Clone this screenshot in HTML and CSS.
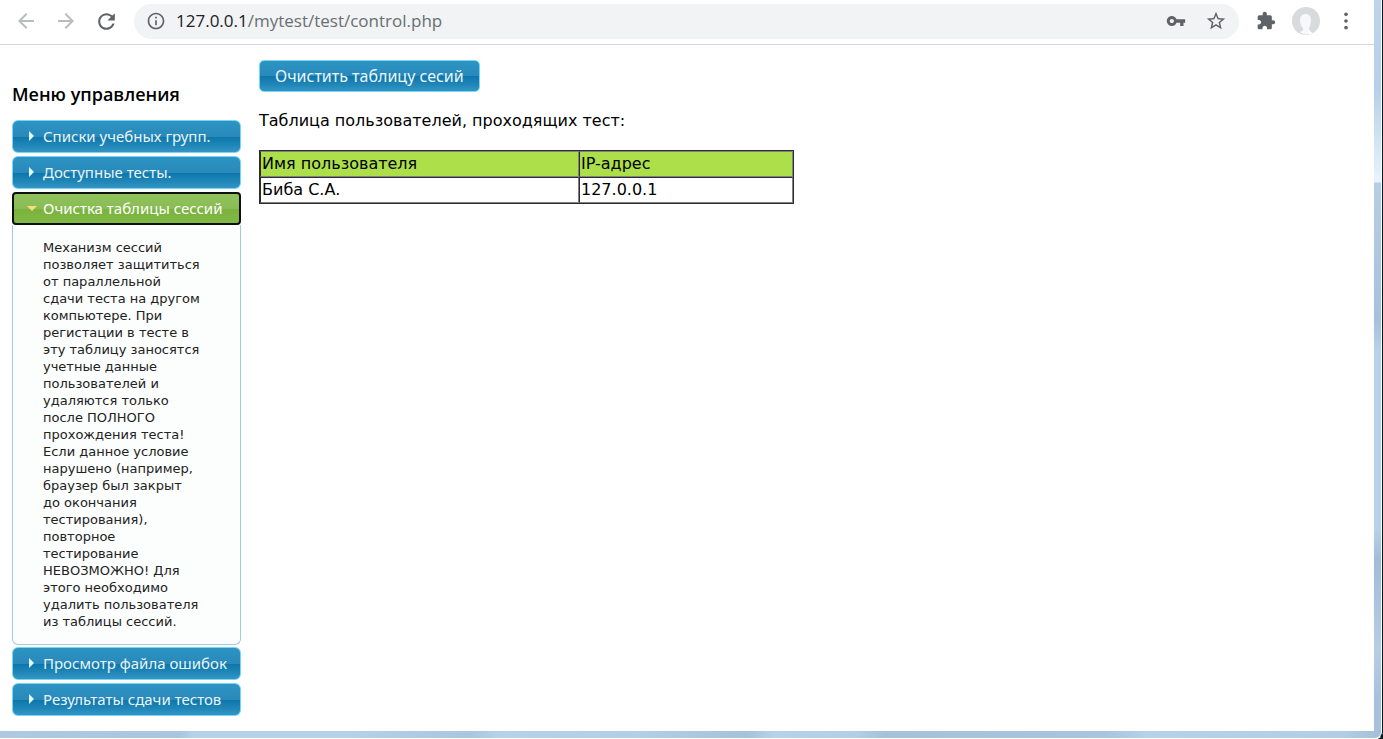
FILE: index.html
```html
<!DOCTYPE html>
<html lang="ru">
<head>
<meta charset="utf-8">
<title>Меню управления</title>
<link rel="stylesheet" href="styles.css">
</head>
<body>
<div class="window">
  <div class="client">
    <header class="toolbar">
      <button class="tool" aria-label="Назад"><svg class="icon faded" viewBox="0 0 24 24"><path d="M20 11H7.830l5.590-5.590L12 4l-8 8 8 8 1.410-1.410L7.830 13H20v-2z"/></svg></button>
      <button class="tool" aria-label="Вперёд"><svg class="icon faded" viewBox="0 0 24 24"><path d="M12 4l-1.410 1.410L16.170 11H4v2h12.170l-5.580 5.590L12 20l8-8z"/></svg></button>
      <button class="tool" aria-label="Обновить"><svg class="icon reload" viewBox="0 0 24 24"><path d="M17.650 6.350C16.200 4.900 14.210 4 12 4c-4.420 0-7.990 3.580-7.990 8s3.570 8 7.990 8c3.730 0 6.840-2.550 7.730-6h-2.080c-.820 2.330-3.040 4-5.650 4-3.310 0-6-2.690-6-6s2.690-6 6-6c1.660 0 3.140.690 4.220 1.780L13 11h7V4l-2.350 2.350z"/></svg></button>
      <div class="address">
        <svg class="icon info" viewBox="0 0 24 24"><path d="M11 17h2v-6h-2v6zm1-15C6.480 2 2 6.480 2 12s4.480 10 10 10 10-4.480 10-10S17.520 2 12 2zm0 18c-4.410 0-8-3.590-8-8s3.590-8 8-8 8 3.590 8 8-3.590 8-8 8zM11 9h2V7h-2v2z"/></svg>
        <a class="url" href="#"><span class="host">127.0.0.1</span>/mytest/test/control.php</a>
        <button class="tool" aria-label="Пароли"><svg class="icon" viewBox="0 0 24 24"><path d="M12.650 10C11.830 7.670 9.610 6 7 6c-3.310 0-6 2.690-6 6s2.690 6 6 6c2.610 0 4.830-1.670 5.650-4H17v4h4v-4h2v-4H12.650zM7 14.500c-1.380 0-2.500-1.120-2.500-2.500s1.120-2.500 2.500-2.500 2.500 1.120 2.500 2.500-1.120 2.500-2.500 2.500z"/></svg></button>
        <button class="tool star" aria-label="Закладка"><svg class="icon" viewBox="0 0 24 24"><path d="M22 9.240l-7.190-.620L12 2 9.190 8.630 2 9.240l5.460 4.730L5.820 21 12 17.270 18.180 21l-1.630-7.030L22 9.240zM12 15.400l-3.760 2.270 1-4.280-3.320-2.880 4.380-.380L12 6.100l1.710 4.040 4.380.380-3.320 2.880 1 4.280L12 15.400z"/></svg></button>
      </div>
      <button class="tool puzzle" aria-label="Расширения"><svg class="icon" viewBox="0 0 24 24"><path d="M20.500 11H19V7c0-1.100-.900-2-2-2h-4V3.500C13 2.120 11.880 1 10.500 1S8 2.120 8 3.500V5H4c-1.100 0-1.990.900-1.990 2v3.800H3.500c1.490 0 2.700 1.210 2.700 2.700s-1.210 2.700-2.700 2.700H2V20c0 1.100.900 2 2 2h3.800v-1.500c0-1.490 1.210-2.700 2.700-2.700 1.490 0 2.700 1.210 2.700 2.700V22H17c1.100 0 2-.900 2-2v-4h1.500c1.380 0 2.500-1.120 2.500-2.500S21.880 11 20.500 11z"/></svg></button>
      <button class="tool" aria-label="Профиль"><svg class="avatar" viewBox="0 0 28 28"><circle cx="14" cy="14" r="14" fill="#d9dadb"/><path d="M8 13C8 5 19 5 19 13c0 5-2 7-2 9 0 2 1 3 0 5-3 1-7 0-9-2 2-1 4-2 3-4-2-2-3-4-3-8z" fill="#f6f9fc"/><path d="M17 22c-1 2-1 4 0 6l4-2c-2-1-4-2-4-4z" fill="#fff"/></svg></button>
      <button class="tool" aria-label="Меню"><svg class="icon" viewBox="0 0 24 24"><circle cx="12" cy="4" r="2.200"/><circle cx="12" cy="12" r="2.200"/><circle cx="12" cy="20" r="2.200"/></svg></button>
    </header>
    <div class="page">
      <nav class="sidebar">
        <h1 class="heading">Меню управления</h1>
        <div class="accordion">
          <button class="tab"><span class="arrow"></span>Списки учебных групп.</button>
          <button class="tab"><span class="arrow"></span>Доступные тесты.</button>
          <div class="section">
            <button class="tab active" aria-expanded="true"><span class="arrow open"></span>Очистка таблицы сессий</button>
            <div class="panel">Механизм сессий<br>позволяет защититься<br>от параллельной<br>сдачи теста на другом<br>компьютере. При<br>регистации в тесте в<br>эту таблицу заносятся<br>учетные данные<br>пользователей и<br>удаляются только<br>после ПОЛНОГО<br>прохождения теста!<br>Если данное условие<br>нарушено (например,<br>браузер был закрыт<br>до окончания<br>тестирования),<br>повторное<br>тестирование<br>НЕВОЗМОЖНО! Для<br>этого необходимо<br>удалить пользователя<br>из таблицы сессий.</div>
          </div>
          <button class="tab"><span class="arrow"></span>Просмотр файла ошибок</button>
          <button class="tab"><span class="arrow"></span>Результаты сдачи тестов</button>
        </div>
      </nav>
      <main class="content">
        <button class="clear">Очистить таблицу сесий</button>
        <p class="caption">Таблица пользователей, проходящих тест:</p>
        <table class="users">
          <thead><tr><th class="name">Имя пользователя</th><th class="ip">IP-адрес</th></tr></thead>
          <tbody><tr><td>Биба С.А.</td><td>127.0.0.1</td></tr></tbody>
        </table>
      </main>
    </div>
  </div>
</div>
</body>
</html>
```
FILE: styles.css
```css
* { box-sizing: border-box; }
html { background: linear-gradient(#0c1a20, #0c1a20) right bottom / 5px 5px no-repeat #fff; }
body { margin: 0; color: #000; font-family: "Open Sans", sans-serif; }
button { font: inherit; margin: 0; border: 0; padding: 0; background: none; cursor: pointer; }
.window {
  min-height: 100vh;
  display: flex;
  padding: 0 7px 7px 0;
  border-right: 1px solid #0c1a20;
  border-bottom: 1px solid #fff;
  box-shadow: inset -1px 0 #fff;
  background:
    linear-gradient(90deg, #afc9e2, #a9c5df 13%, #b6d1ea 14%, #b6d1ea 25%, #a9c5df 34%, #b6d1ea 36%, #b3cee7 46%, #a6c1da 54%, #b6d1ea 56%, #b3cee7 62%, #a6c2db 64%, #a8c4de 80%, #b6d1ea 83%, #b3cde6 97%, #a3bfd8) bottom / 100% 7px no-repeat,
    linear-gradient(#bed4ec, #b5d0ea 90px, #e8f3fc 180px, #e8f3fc 182px, #b5cee6 183px, #a5c1dc 320px, #b6d2ea 350px, #b6d2ea 530px, #a0bcd8 560px, #b5cee6 650px, #a5c1dc 700px);
  border-radius: 0 0 7px 0;
}
.client { flex: 1; min-width: 0; background: #fff; margin-right: 1px; }
.toolbar {
  height: 45px; display: flex; align-items: center;
  padding: 0 8px 2px 14px; border-bottom: 1px solid #d5d9dd;
}
.tool { flex: none; display: flex; align-items: center; justify-content: center; width: 40px; height: 32px; }
.toolbar > .tool:nth-child(-n+3) { justify-content: flex-start; }
.icon { width: 20px; height: 20px; fill: #5f6368; display: block; }
.toolbar .faded { width: 24px; height: 24px; fill: #babcbe; }
.toolbar .reload { width: 25px; height: 25px; }
.star .icon { width: 22px; height: 22px; }
.address { flex: 1; min-width: 0; height: 35px; border-radius: 18px; background: #f1f3f4; display: flex; align-items: center; padding: 0 3px 0 12px; }
.url { flex: 1; margin-left: 10px; font-size: 17px; line-height: 24px; color: #6a6e73; text-decoration: none; }
.host { color: #202124; }
.puzzle { margin-left: 7px; }
.avatar { width: 28px; height: 28px; }
.page { display: flex; align-items: flex-start; gap: 18px; padding: 15px 12px 12px; }
.sidebar { flex: none; width: 229px; }
.heading { margin: 21px 0 13px; font-size: 18px; line-height: 26px; font-weight: 600; }
.accordion { display: flex; flex-direction: column; gap: 3px; font-family: "Noto Sans", sans-serif; font-size: 15px; }
.tab {
  display: flex; align-items: center; width: 100%; height: 33px; padding: 0 0 1px 14px;
  border: 1px solid #77d5f7; border-radius: 6px; color: #eaf5f7; text-align: left; white-space: nowrap;
  background: linear-gradient(#2c94c3, #2989ba 50%, #0c76ab 51%, #2187b8 80%, #3495c4);
}
.arrow { flex: none; width: 16px; height: 16px; display: flex; align-items: center; }
.arrow::before { content: ""; margin-left: 2px; border: 5px solid transparent; border-left-color: #e0fdff; border-right: 0; }
.arrow.open::before { margin-left: 0; border: 5px solid transparent; border-top-color: #fadd7a; border-bottom: 0; }
.active { border: 2px solid #101010; border-radius: 4px; color: #fff; padding-left: 13px; background: linear-gradient(#91c35c, #8abc55 50%, #79b33d 51%, #80b944); }
.panel { padding: 14px 0 14px 30px; border: 1px solid #a6c9e2; border-top: 0; border-radius: 0 0 6px 6px; background: #fcfdfd; color: #222; font-family: "DejaVu Sans", sans-serif; font-size: 13px; line-height: 17px; white-space: nowrap; }
.section { margin-bottom: -1px; }
.content { flex: 1; min-width: 0; font-family: "DejaVu Sans", sans-serif; font-size: 16px; }
.clear { display: block; height: 32px; padding: 0 15px; border: 1px solid #77d5f7; border-radius: 5px; color: #eaf5f7; font-family: "Noto Sans", sans-serif; font-size: 16px; background: linear-gradient(#2c94c3, #2989ba 50%, #0c76ab 51%, #2187b8 80%, #3495c4); }
.caption { margin: 16px 0; line-height: 26px; }
.users { width: 535px; table-layout: fixed; border: 1px solid #2c2c2c; border-spacing: 0; line-height: 22px; }
.users th, .users td { padding: 1px; border: 1px solid; border-color: #2c2c2c #808080 #808080 #2c2c2c; text-align: left; font-weight: 400; }
.users th { background: #acdf4a; border-top-color: #808080; }
.name { width: 319px; }
```
